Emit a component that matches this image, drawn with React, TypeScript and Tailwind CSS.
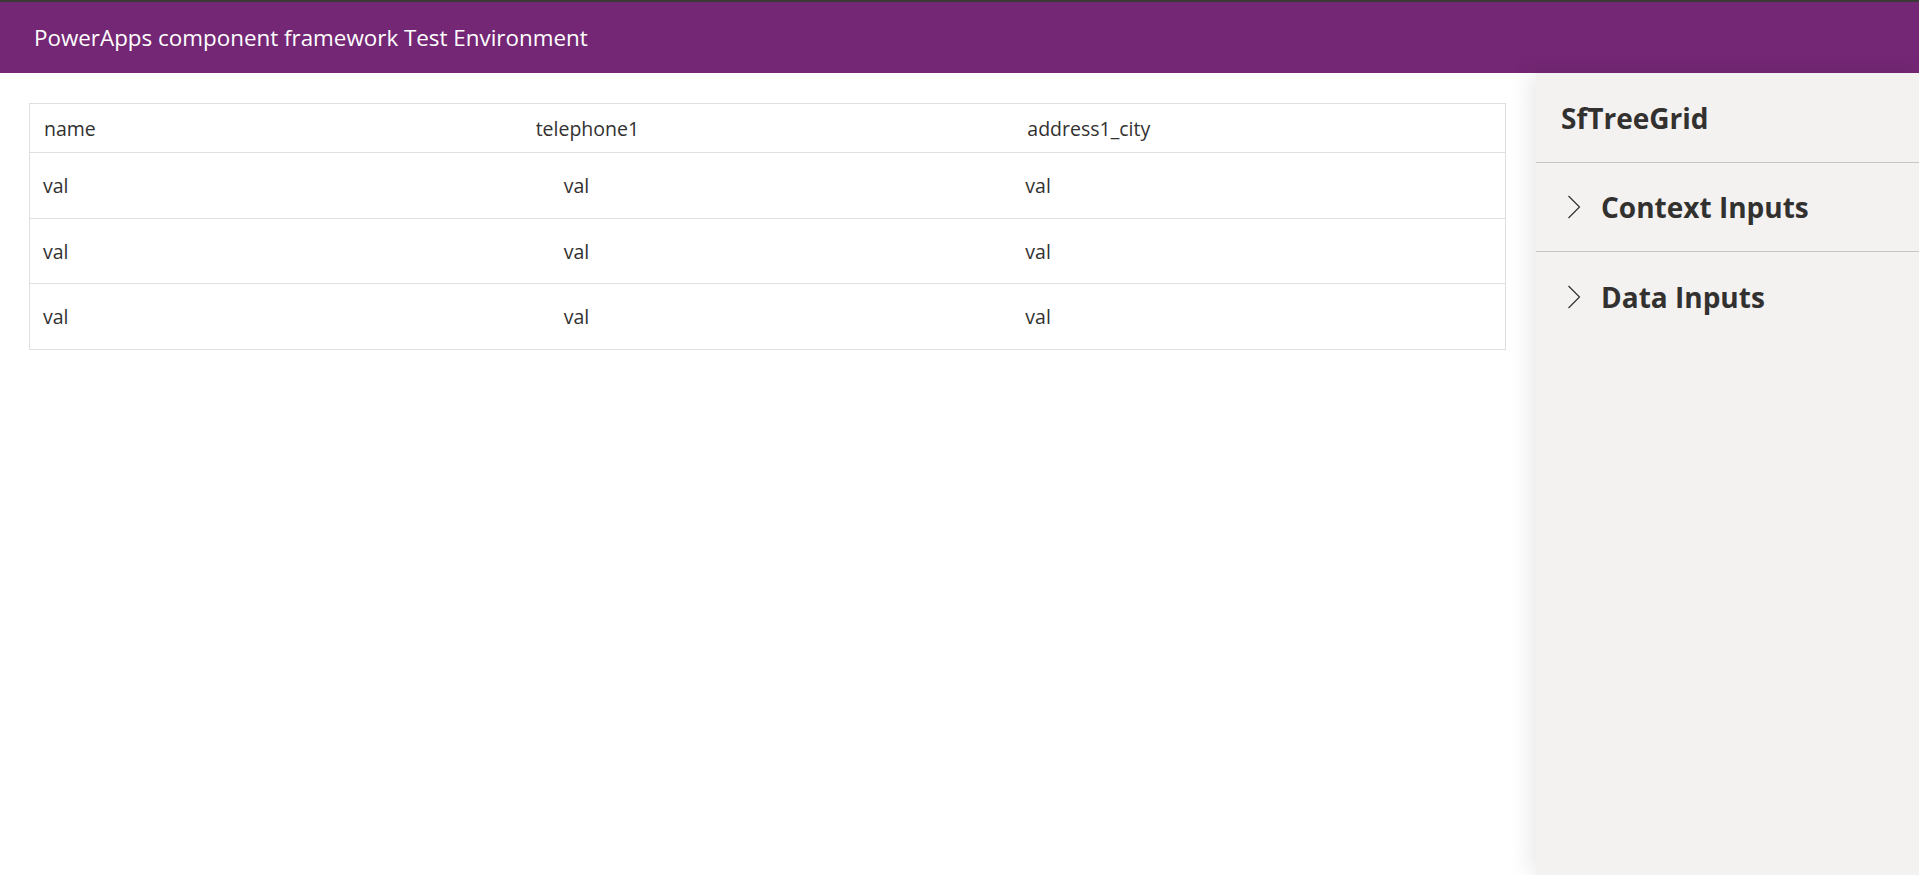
const columns = ["name", "telephone1", "address1_city"];
const rows = [
  { h: "h-[66px]", cells: ["val", "val", "val"] },
  { h: "h-[65px]", cells: ["val", "val", "val"] },
  { h: "h-[65px]", cells: ["val", "val", "val"] },
];

function Chevron() {
  return (
    <svg width="14" height="24" viewBox="0 0 14 24" className="shrink-0">
      <path d="M1.5 1 L12.5 12 L1.5 23" fill="none" stroke="#323130" strokeWidth="1.2" />
    </svg>
  );
}

export default function App() {
  return (
    <div className="min-h-screen h-[875px] flex flex-col bg-white text-[#323130] font-['Open_Sans',sans-serif] overflow-hidden">
      {/* Header */}
      <header className="h-[73px] shrink-0 border-t-2 border-[#3b3a39] bg-[#742774] flex items-center pl-[34px] pt-[2px]">
        <span className="text-white text-[22.4px] leading-none">PowerApps component framework Test Environment</span>
      </header>

      <div className="flex flex-1 min-h-0">
        {/* Control area */}
        <main className="flex-1 pl-[29px] pr-[30px] pt-[30px]">
          <div className="border border-[#e1dfdd] text-[19.5px]">
            <div className="grid grid-cols-3 h-[49px] items-center border-b border-[#e1dfdd] pt-[2px]">
              {columns.map((c) => (
                <div key={c} className="pl-[14px]">{c}</div>
              ))}
            </div>
            {rows.map((r, i) => (
              <div
                key={i}
                className={`grid grid-cols-3 ${r.h} items-center pt-[1px] ${i < rows.length - 1 ? "border-b border-[#e1dfdd]" : ""}`}
              >
                <div className="pl-[13px]">{r.cells[0]}</div>
                <div className="pl-[42px]">{r.cells[1]}</div>
                <div className="pl-[12px]">{r.cells[2]}</div>
              </div>
            ))}
          </div>
        </main>

        {/* Property pane */}
        <aside className="w-[383px] shrink-0 bg-[#f3f2f1] shadow-[-6px_0_22px_rgba(0,0,0,0.09)]">
          <div className="h-[90px] flex items-center pl-[25px] border-b border-[#c8c6c4]">
            <h2 className="text-[28px] font-bold leading-none">SfTreeGrid</h2>
          </div>
          <div className="h-[89px] flex items-center pl-[31px] gap-[20px] border-b border-[#c8c6c4]">
            <Chevron />
            <span className="text-[28px] font-bold leading-none">Context Inputs</span>
          </div>
          <div className="h-[89px] flex items-center pl-[31px] gap-[20px]">
            <Chevron />
            <span className="text-[28px] font-bold leading-none">Data Inputs</span>
          </div>
        </aside>
      </div>
    </div>
  );
}
